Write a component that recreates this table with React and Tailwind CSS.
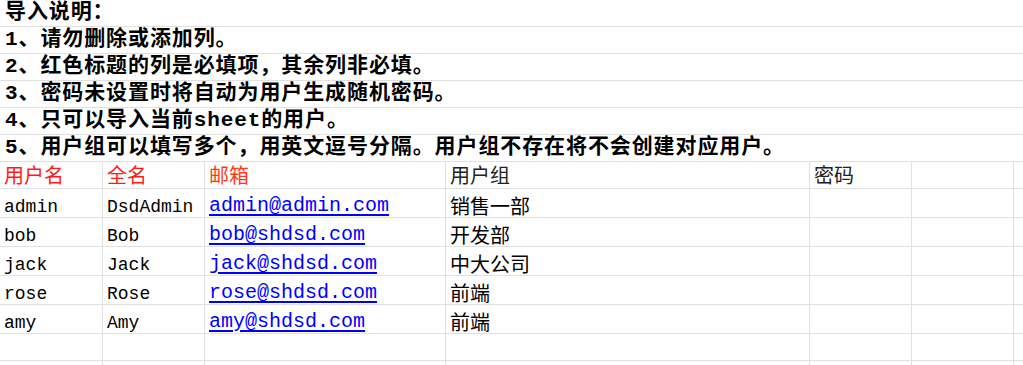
import React from "react";

const notes = [
  "导入说明：",
  "1、请勿删除或添加列。",
  "2、红色标题的列是必填项，其余列非必填。",
  "3、密码未设置时将自动为用户生成随机密码。",
  "4、只可以导入当前sheet的用户。",
  "5、用户组可以填写多个，用英文逗号分隔。用户组不存在将不会创建对应用户。",
];

const users = [
  ["admin", "DsdAdmin", "admin@admin.com", "销售一部"],
  ["bob", "Bob", "bob@shdsd.com", "开发部"],
  ["jack", "Jack", "jack@shdsd.com", "中大公司"],
  ["rose", "Rose", "rose@shdsd.com", "前端"],
  ["amy", "Amy", "amy@shdsd.com", "前端"],
];

const widths = ["w-[103px]", "w-[102px]", "w-[241px]", "w-[364px]", "w-[102px]", "w-[102px]"];

function Cell({ w, children, className = "" }) {
  return (
    <div className={`${w} shrink-0 h-full border-r border-[#e0e0e0] flex items-end pl-[4px] overflow-visible whitespace-nowrap ${className}`}>
      {children}
    </div>
  );
}

function Row({ h, cells }) {
  return (
    <div className={`flex ${h} border-b border-[#e0e0e0]`}>
      {widths.map((w, i) => (
        <Cell key={i} w={w}>{cells ? cells[i] : null}</Cell>
      ))}
      <div className="flex-1 h-full" />
    </div>
  );
}

export default function App() {
  const cjk = "font-['Noto_Sans_CJK_SC',sans-serif] text-[20px] leading-[24px] pb-[1px]";
  const cjkData = "font-['Noto_Sans_CJK_SC',sans-serif] text-[20px] leading-[22px] text-black";
  const mono = "font-['Liberation_Mono','Noto_Sans_CJK_SC',monospace] text-[18px] leading-[20px] text-black";
  return (
    <div className="w-[1023px] h-[365px] overflow-hidden bg-white">
      {notes.map((t, i) => (
        <div
          key={i}
          className="h-[27px] border-b border-[#e0e0e0] flex items-end pl-[5px] whitespace-nowrap font-['Liberation_Mono','Noto_Sans_CJK_SC',monospace] font-bold text-[21px] leading-[26px] tracking-[0.9px] text-black"
        >
          {t}
        </div>
      ))}
      <Row
        h="h-[27px]"
        cells={[
          <span className={`${cjk} text-[#ff1a1a]`}>用户名</span>,
          <span className={`${cjk} text-[#ff1a1a]`}>全名</span>,
          <span className={`${cjk} text-[#ff3a1a]`}>邮箱</span>,
          <span className={`${cjk} text-[#222]`}>用户组</span>,
          <span className={`${cjk} text-[#222]`}>密码</span>,
          null,
        ]}
      />
      {users.map((u, i) => (
        <Row
          key={i}
          h="h-[29px]"
          cells={[
            <span className={mono}>{u[0]}</span>,
            <span className={mono}>{u[1]}</span>,
            <span className="font-['Liberation_Mono',monospace] text-[20px] leading-[22px] text-[#0000ff] underline underline-offset-[3px] decoration-[2px]">{u[2]}</span>,
            <span className={cjkData}>{u[3]}</span>,
            null,
            null,
          ]}
        />
      ))}
      <Row h="h-[27px]" />
      <Row h="h-[27px]" />
    </div>
  );
}
